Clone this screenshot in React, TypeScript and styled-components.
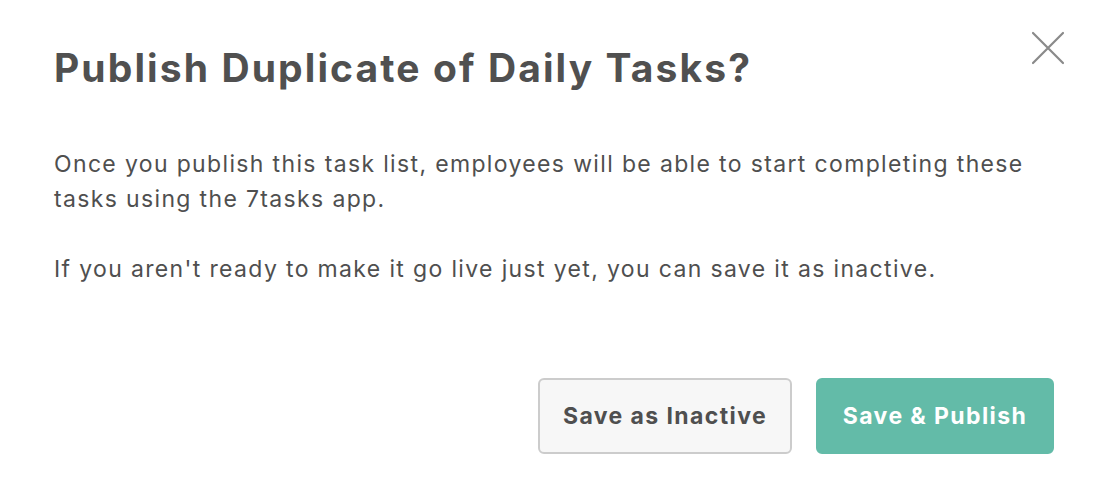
import styled, { createGlobalStyle } from "styled-components";

const GlobalStyle = createGlobalStyle`
  html, body {
    margin: 0;
    padding: 0;
    background: #ffffff;
  }
  body {
    font-family: "Inter", "Noto Sans", "Liberation Sans", sans-serif;
    color: #4a4a4a;
  }
`;

const Modal = styled.div`
  position: relative;
  box-sizing: border-box;
  width: 1102px;
  height: 504px;
  padding: 40px 48px 0 54px;
  display: flex;
  flex-direction: column;
`;

const Title = styled.h1`
  margin: 0;
  font-size: 39px;
  line-height: 56px;
  font-weight: 700;
  letter-spacing: 2.1px;
  color: #505050;
`;

const Body = styled.div`
  margin-top: 51px;
  display: flex;
  flex-direction: column;
  gap: 35px;
`;

const Paragraph = styled.p`
  margin: 0;
  font-size: 23px;
  line-height: 35px;
  letter-spacing: 1.35px;
  color: #4f4f4f;
`;

const Actions = styled.div`
  margin-top: auto;
  margin-bottom: 50px;
  display: flex;
  justify-content: flex-end;
  gap: 24px;
`;

const Button = styled.button<{ $primary?: boolean }>`
  box-sizing: border-box;
  height: 76px;
  padding: 0 20px;
  border-radius: 6px;
  font-family: inherit;
  font-size: 23px;
  font-weight: 700;
  letter-spacing: 1.4px;
  cursor: pointer;
  border: 2px solid ${({ $primary }) => ($primary ? "#63bba8" : "#cccccc")};
  background: ${({ $primary }) => ($primary ? "#63bba8" : "#f7f7f7")};
  color: ${({ $primary }) => ($primary ? "#ffffff" : "#4f4f4f")};
`;

const CloseButton = styled.button`
  position: absolute;
  top: 30px;
  right: 36px;
  width: 36px;
  height: 36px;
  padding: 0;
  border: none;
  background: transparent;
  cursor: pointer;
  display: flex;
  align-items: center;
  justify-content: center;
`;

const CloseIcon = () => (
  <svg width="36" height="36" viewBox="0 0 36 36" fill="none">
    <path
      d="M3 3 L33 33 M33 3 L3 33"
      stroke="#8a8a8a"
      strokeWidth="2.2"
      strokeLinecap="round"
    />
  </svg>
);

export default function App() {
  return (
    <>
      <GlobalStyle />
      <Modal>
        <CloseButton aria-label="Close">
          <CloseIcon />
        </CloseButton>
        <Title>Publish Duplicate of Daily Tasks?</Title>
        <Body>
          <Paragraph>
            Once you publish this task list, employees will be able to start
            completing these
            <br />
            tasks using the 7tasks app.
          </Paragraph>
          <Paragraph>
            If you aren't ready to make it go live just yet, you can save it as
            inactive.
          </Paragraph>
        </Body>
        <Actions>
          <Button style={{ width: 254 }}>Save as Inactive</Button>
          <Button $primary style={{ width: 238 }}>
            Save &amp; Publish
          </Button>
        </Actions>
      </Modal>
    </>
  );
}
